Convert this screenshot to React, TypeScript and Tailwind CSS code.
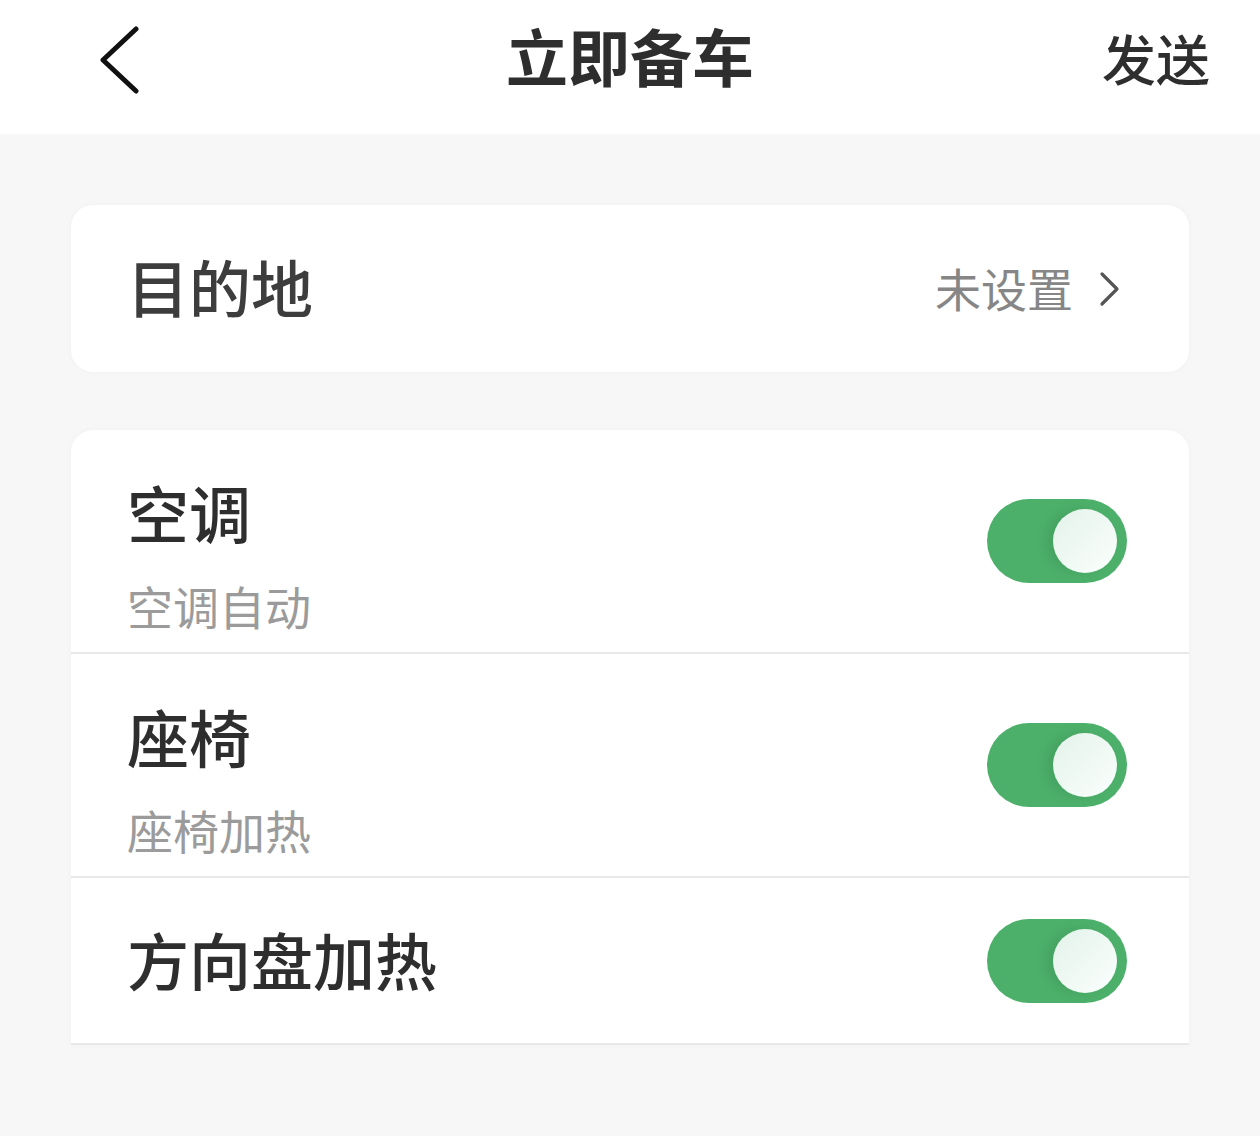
import React, { useState } from "react";

const font = { fontFamily: '"Noto Sans CJK SC", "Noto Sans", sans-serif' };

function Toggle({ on, onClick }: { on: boolean; onClick: () => void }) {
  return (
    <button
      onClick={onClick}
      className={`relative h-[84px] w-[140px] shrink-0 rounded-full ${on ? "bg-[#4cb06a]" : "bg-[#d9d9d9]"}`}
    >
      <span
        className={`absolute top-[10px] h-[64px] w-[64px] rounded-full bg-gradient-to-br from-[#e3f2ea] to-[#fbfffd] shadow-[-8px_0_12px_rgba(0,0,0,0.08)] ${on ? "right-[10px]" : "left-[10px]"}`}
      />
    </button>
  );
}

function SettingRow({
  title,
  sub,
  tall,
}: {
  title: string;
  sub?: string;
  tall?: boolean;
}) {
  const [on, setOn] = useState(true);
  return (
    <div
      className={`flex items-center justify-between border-b-2 border-[#e8e8e8] pl-[56px] pr-[62px] ${tall ? "h-[224px]" : "h-[167px]"}`}
    >
      {sub ? (
        <div className="flex flex-col self-stretch pt-[51px]">
          <span className="text-[62px] font-medium leading-[62px] text-[#2e2e2e]">{title}</span>
          <span className="mt-[39px] text-[46px] leading-[46px] text-[#9b9b9b]">{sub}</span>
        </div>
      ) : (
        <span className="pb-[4px] text-[62px] font-medium leading-[62px] text-[#2e2e2e]">{title}</span>
      )}
      <Toggle on={on} onClick={() => setOn(!on)} />
    </div>
  );
}

export default function App() {
  return (
    <div className="min-h-[1136px] w-full bg-[#f7f7f7]" style={font}>
      <header className="relative flex h-[134px] items-start bg-white">
        <div className="flex h-[116px] w-full items-center justify-between pl-[98px] pr-[50px]">
          <button aria-label="back" className="mt-[4px]">
            <svg width="42" height="68" viewBox="0 0 42 68" fill="none">
              <path
                d="M38 3 L5 34 L38 65"
                stroke="#111"
                strokeWidth="5"
                strokeLinecap="round"
                strokeLinejoin="round"
              />
            </svg>
          </button>
          <span className="text-[54px] font-medium leading-[54px] text-[#2e2e2e]">发送</span>
        </div>
        <h1 className="absolute left-1/2 top-[24px] -translate-x-1/2 text-[62px] font-bold leading-[62px] text-[#2e2e2e]">
          立即备车
        </h1>
      </header>

      <main className="px-[71px] pt-[71px]">
        <div className="flex h-[167px] items-center justify-between rounded-[22px] bg-white pl-[56px] pr-[68px] shadow-[0_0_6px_rgba(0,0,0,0.03)]">
          <span className="pb-[6px] text-[62px] font-medium leading-[62px] text-[#3d3d3d]">目的地</span>
          <div className="flex items-center gap-[26px]">
            <span className="pb-[4px] text-[46px] leading-[46px] text-[#868686]">未设置</span>
            <svg width="22" height="36" viewBox="0 0 22 36" fill="none">
              <path
                d="M3 3 L18 18 L3 33"
                stroke="#555"
                strokeWidth="3.2"
                strokeLinecap="round"
                strokeLinejoin="round"
              />
            </svg>
          </div>
        </div>

        <div className="mt-[58px] overflow-hidden rounded-t-[22px] bg-white shadow-[0_0_6px_rgba(0,0,0,0.03)]">
          <SettingRow title="空调" sub="空调自动" tall />
          <SettingRow title="座椅" sub="座椅加热" tall />
          <SettingRow title="方向盘加热" />
        </div>
      </main>
    </div>
  );
}
